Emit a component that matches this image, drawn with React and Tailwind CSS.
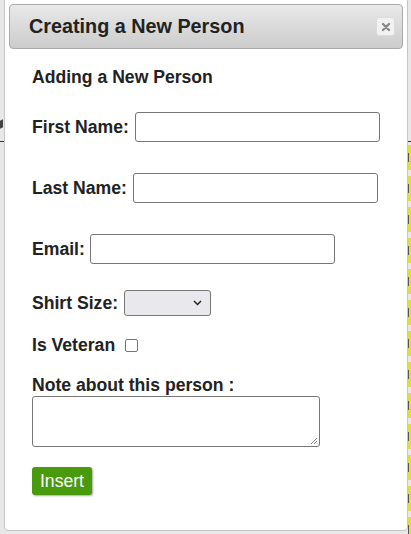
import React from 'react';

const rows = Array.from({ length: 13 });

const BackingPage = () => (
  <div className="pt-[119px]">
    <div className="h-[22px] flex">
      <div className="w-[3px] h-[8px] bg-[#444] mt-[1px] skew-y-[-30deg]" />
    </div>
    <div className="h-px bg-[#333]" />
    <div className="flex flex-col pt-[3px]">
      {rows.map((_, i) => (
        <div key={i} className="h-[31px] flex justify-end">
          <div className="w-[3px] h-[25px] bg-[#dede3c] flex items-center">
            <div className="w-[1px] h-[9px] bg-[#555]" />
          </div>
        </div>
      ))}
    </div>
    <div className="flex mt-[-2px]">
      <div className="ml-[271px] w-[54px] h-[6px] bg-[#5f9a3f]" />
      <div className="ml-[15px] flex-1 h-[6px] bg-[#dede3c]" />
    </div>
  </div>
);

const Field = ({ label, inputWidth, gap = '6px', className = '' }) => (
  <div className={`flex items-center ${className}`}>
    <label className="text-[17.6px] leading-[21px] font-bold text-[#222]">{label}</label>
    <input
      type="text"
      className="h-[30px] border border-[#767676] rounded-[3px] bg-white"
      style={{ width: inputWidth, marginLeft: gap }}
    />
  </div>
);

export default function App() {
  return (
    <div
      className="relative w-[411px] h-[534px] overflow-hidden bg-[#e8e8e8]"
      style={{ fontFamily: '"Liberation Sans", Arial, sans-serif' }}
    >
      <BackingPage />

      <div className="absolute left-[4px] top-[-4px] w-[404px] h-[535px] bg-white border border-[#c5c5c5] rounded-[4px] p-[4px] pt-[7px]">
        <div className="h-[45px] flex items-center justify-between pl-[19px] pr-[7px] border border-[#aaaaaa] rounded-[4px] bg-gradient-to-b from-[#e9e9e9] to-[#cccccc]">
          <span className="text-[19.8px] font-bold text-[#222]">Creating a New Person</span>
          <button className="w-[19px] h-[19px] rounded-[3px] bg-[#f2f2f2] border border-[#dcdcdc] flex items-center justify-center">
            <svg width="10" height="10" viewBox="0 0 10 10">
              <path d="M2 2 L8 8 M8 2 L2 8" stroke="#888" strokeWidth="2.4" strokeLinecap="round" />
            </svg>
          </button>
        </div>

        <div className="pl-[23px] pt-[18px]">
          <h3 className="text-[17.6px] font-bold text-[#222] leading-[21px]">Adding a New Person</h3>

          <Field label="First Name:" inputWidth="245px" className="mt-[24px]" />
          <Field label="Last Name:" inputWidth="245px" className="mt-[31px]" />
          <Field label="Email:" inputWidth="245px" gap="5px" className="mt-[31px]" />

          <div className="flex items-center mt-[26px]">
            <label className="text-[17.6px] leading-[21px] font-bold text-[#222]">Shirt Size:</label>
            <div className="ml-[6px] w-[87px] h-[26px] border border-[#767676] rounded-[3px] bg-[#e9e9ed] flex items-center justify-end pr-[8px]">
              <svg width="9" height="6" viewBox="0 0 9 6">
                <path d="M1 1 L4.5 4.5 L8 1" fill="none" stroke="#222" strokeWidth="1.5" />
              </svg>
            </div>
          </div>

          <div className="flex items-center mt-[19px]">
            <label className="text-[17.6px] leading-[21px] font-bold text-[#222]">Is Veteran</label>
            <div className="ml-[10px] w-[13px] h-[13px] border border-[#767676] rounded-[2px] bg-white" />
          </div>

          <div className="mt-[19px] text-[17.6px] font-bold text-[#222] leading-[21px]">Note about this person :</div>
          <div className="relative w-[288px] h-[51px] border border-[#767676] rounded-[3px] bg-white">
            <svg className="absolute right-[1px] bottom-[1px]" width="9" height="9" viewBox="0 0 9 9">
              <path d="M8 2 L2 8 M8 5 L5 8 M8 7.5 L7.5 8" stroke="#888" strokeWidth="1" />
            </svg>
          </div>

          <button className="mt-[20px] w-[60px] h-[28px] rounded-[3px] bg-[#4a9a0e] text-white text-[17.6px] shadow-[1px_1px_2px_rgba(0,0,0,0.35)] flex items-center justify-center">
            Insert
          </button>
        </div>
      </div>
    </div>
  );
}
